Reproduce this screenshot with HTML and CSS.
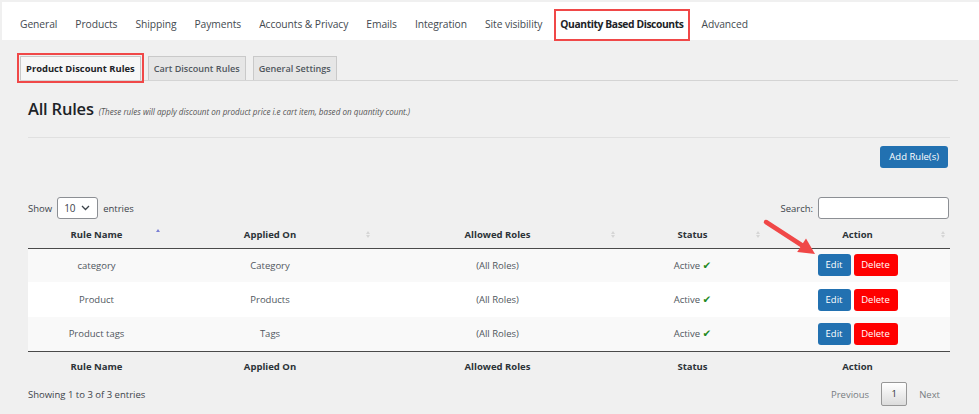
FILE: index.html
```html
<!DOCTYPE html>
<html lang="en">
<head>
<meta charset="utf-8">
<title>Quantity Based Discounts</title>
<link rel="stylesheet" href="styles.css">
</head>
<body>
<div class="frame">
  <nav class="topnav">
    <a href="#">General</a>
    <a href="#">Products</a>
    <a href="#">Shipping</a>
    <a href="#">Payments</a>
    <a href="#">Accounts &amp; Privacy</a>
    <a href="#">Emails</a>
    <a href="#">Integration</a>
    <a href="#">Site visibility</a>
    <a href="#" class="active">Quantity Based Discounts</a>
    <a href="#">Advanced</a>
  </nav>

  <div class="content">
    <div class="subtabs">
      <a href="#" class="tab active">Product Discount Rules</a>
      <a href="#" class="tab">Cart Discount Rules</a>
      <a href="#" class="tab">General Settings</a>
    </div>

    <div class="panel">
      <div class="heading">
        <h2>All Rules</h2>
        <span class="hint">(These rules will apply discount on product price i.e cart item, based on quantity count.)</span>
      </div>
      <hr class="rule">

      <div class="actions-row">
        <a href="#" class="btn btn-blue btn-add">Add Rule(s)</a>
      </div>

      <div class="controls">
        <div class="length">
          <span>Show</span>
          <span class="select"><span>10</span>
            <svg width="9" height="6" viewBox="0 0 9 6"><path d="M1 1 L4.5 4.5 L8 1" fill="none" stroke="#3c434a" stroke-width="1.3"/></svg>
          </span>
          <span>entries</span>
        </div>
        <div class="search">
          <span>Search:</span>
          <span class="input"></span>
        </div>
      </div>

      <table class="rules">
        <colgroup>
          <col class="c1"><col class="c2"><col class="c3"><col class="c4"><col class="c5">
        </colgroup>
        <thead>
          <tr>
            <th><div class="th"><span></span><span>Rule Name</span><span class="sort asc"><i class="up"></i><i class="down"></i></span></div></th>
            <th><div class="th"><span></span><span>Applied On</span><span class="sort"><i class="up"></i><i class="down"></i></span></div></th>
            <th><div class="th"><span></span><span>Allowed Roles</span><span class="sort"><i class="up"></i><i class="down"></i></span></div></th>
            <th><div class="th"><span></span><span>Status</span><span class="sort"><i class="up"></i><i class="down"></i></span></div></th>
            <th><div class="th"><span></span><span>Action</span><span class="sort"><i class="up"></i><i class="down"></i></span></div></th>
          </tr>
        </thead>
        <tbody>
          <tr>
            <td>category</td>
            <td>Category</td>
            <td>(All Roles)</td>
            <td>Active <span class="check">✔</span></td>
            <td><span class="btns"><a href="#" class="btn btn-blue">Edit</a><a href="#" class="btn btn-red">Delete</a></span></td>
          </tr>
          <tr>
            <td>Product</td>
            <td>Products</td>
            <td>(All Roles)</td>
            <td>Active <span class="check">✔</span></td>
            <td><span class="btns"><a href="#" class="btn btn-blue">Edit</a><a href="#" class="btn btn-red">Delete</a></span></td>
          </tr>
          <tr>
            <td>Product tags</td>
            <td>Tags</td>
            <td>(All Roles)</td>
            <td>Active <span class="check">✔</span></td>
            <td><span class="btns"><a href="#" class="btn btn-blue">Edit</a><a href="#" class="btn btn-red">Delete</a></span></td>
          </tr>
        </tbody>
        <tfoot>
          <tr>
            <th>Rule Name</th>
            <th>Applied On</th>
            <th>Allowed Roles</th>
            <th>Status</th>
            <th>Action</th>
          </tr>
        </tfoot>
      </table>

      <div class="table-footer">
        <span class="info">Showing 1 to 3 of 3 entries</span>
        <div class="paging">
          <a href="#" class="pg-link">Previous</a>
          <a href="#" class="pg-current">1</a>
          <a href="#" class="pg-link">Next</a>
        </div>
      </div>
    </div>
  </div>

  <svg class="arrow" width="60" height="45" viewBox="0 0 60 45">
    <line x1="6" y1="7" x2="43" y2="31" stroke="#f04747" stroke-width="4.5" stroke-linecap="round"/>
    <polygon points="55,39 37.2,36.9 46,23.5" fill="#f04747"/>
  </svg>
</div>
</body>
</html>
```

FILE: styles.css
```css
* { box-sizing: border-box; }

body {
  margin: 0;
  background: #f0f0f0;
  font-family: "Open Sans", "Noto Sans", sans-serif;
  color: #3c434a;
}

a { text-decoration: none; }

.frame {
  position: relative;
  width: 979px;
  height: 414px;
  overflow: hidden;
}

/* Top navigation */
.topnav {
  margin: 2px 0 0 2px;
  height: 38px;
  background: #fff;
  display: flex;
  gap: 6px;
  padding: 7px 0 0 12px;
}
.topnav a {
  display: block;
  height: 32px;
  padding: 6px 4px 0;
  border: 2px solid transparent;
  font-size: 10.3px;
  line-height: 14px;
  color: #444a50;
  white-space: nowrap;
  letter-spacing: -0.08px;
}
.topnav a.active {
  border-color: #f04848;
  color: #1d2327;
  font-weight: 700;
  letter-spacing: -0.4px;
}

/* Content */
.content {
  padding: 16px 21px 0 20px;
}

.subtabs {
  display: flex;
  gap: 7px;
  height: 25px;
  border-bottom: 1px solid #d4d4d4;
}
.tab {
  display: block;
  height: 24px;
  padding: 0 5px;
  border: 1px solid #c9c9c9;
  border-bottom: none;
  background: #e6e6e6;
  font-size: 9.1px;
  font-weight: 600;
  line-height: 23px;
  color: #50575e;
  white-space: nowrap;
}
.tab.active {
  background: #f7f7f7;
  color: #1d2327;
  font-size: 9.4px;
  font-weight: 700;
  outline: 2px solid #f04848;
  outline-offset: 1px;
}

.panel {
  padding: 0 8px;
}

.heading {
  margin-top: 18px;
  height: 20px;
  display: flex;
  align-items: baseline;
  gap: 5px;
}
.heading h2 {
  margin: 0;
  font-size: 16.5px;
  font-weight: 600;
  line-height: 20px;
  color: #1d2327;
  letter-spacing: -0.2px;
}
.hint {
  font-size: 8.1px;
  font-style: italic;
  color: #555;
}

.rule {
  border: 0;
  border-top: 1px solid #e0e0e0;
  margin: 18px 0 0;
  height: 0;
}

.actions-row {
  display: flex;
  justify-content: flex-end;
  margin-top: 8px;
  padding-right: 2px;
}

.btn {
  display: inline-block;
  height: 22px;
  line-height: 22px;
  padding: 0 8px;
  border-radius: 3px;
  font-size: 9.5px;
  color: #fff;
}
.btn-blue { background: #2271b1; }
.btn-red { background: #ff0000; }
.btn-add { padding: 0 9px; }

.controls {
  margin-top: 29px;
  height: 22px;
  display: flex;
  justify-content: space-between;
  align-items: center;
  font-size: 9.5px;
  color: #3c434a;
}
.length, .search {
  display: flex;
  align-items: center;
  gap: 5px;
}
.select {
  width: 41px;
  height: 22px;
  border: 1px solid #8c8f94;
  border-radius: 3px;
  background: #fff;
  display: flex;
  align-items: center;
  justify-content: space-between;
  padding: 0 7px 0 6px;
  font-size: 10px;
}
.search { padding-right: 1px; }
.input {
  display: block;
  width: 131px;
  height: 22px;
  border: 1px solid #8c8f94;
  border-radius: 3px;
  background: #fff;
}

/* Table */
.rules {
  margin-top: 3px;
  width: 922px;
  border-collapse: collapse;
  table-layout: fixed;
  font-size: 9.5px;
}
.c1 { width: 137px; }
.c2 { width: 210px; }
.c3 { width: 245px; }
.c4 { width: 145px; }
.c5 { width: 185px; }

.rules th {
  font-weight: 700;
  color: #2c3338;
  text-align: center;
  padding: 0;
}
.rules thead th {
  height: 26px;
  border-bottom: 1px solid #4a4a4a;
}
.th {
  display: grid;
  grid-template-columns: 1fr auto 1fr;
  align-items: center;
}
.sort {
  justify-self: end;
  margin-right: 5px;
  display: flex;
  flex-direction: column;
  gap: 1px;
}
.sort i {
  display: block;
  width: 0;
  height: 0;
  border-left: 2.5px solid transparent;
  border-right: 2.5px solid transparent;
}
.sort .up { border-bottom: 3.5px solid #d6d6d6; }
.sort .down { border-top: 3.5px solid #d6d6d6; }
.sort.asc { transform: translateY(-2px); }
.sort.asc .up { border-bottom-color: #7a7fd4; }
.sort.asc .down { border-top-color: transparent; }

.rules td {
  height: 34.4px;
  text-align: center;
  color: #50575e;
  padding: 0 10px;
}
.rules tbody tr:nth-child(odd) { background: #f9f9f9; }
.rules tbody tr:nth-child(even) { background: #fff; }

.rules tfoot th {
  height: 31px;
  border-top: 1px solid #4a4a4a;
}

.check {
  font-family: "DejaVu Sans", sans-serif;
  font-size: 10.5px;
  color: #1e8a1e;
}

.btns {
  display: inline-flex;
  gap: 3px;
  vertical-align: middle;
}
.btns .btn-blue { width: 33px; padding: 0; text-align: center; }
.btns .btn-red { width: 44px; padding: 0; text-align: center; }

.table-footer {
  height: 24px;
  display: flex;
  justify-content: space-between;
  align-items: center;
  font-size: 9.5px;
  color: #3c434a;
}
.paging {
  display: flex;
  align-items: center;
  gap: 12px;
  padding-right: 10px;
}
.pg-link { color: #787c82; }
.pg-current {
  display: block;
  width: 26px;
  height: 24px;
  line-height: 22px;
  text-align: center;
  border: 1px solid #979797;
  border-radius: 2px;
  background: linear-gradient(#ffffff, #dcdcdc);
  color: #333;
}

.arrow {
  position: absolute;
  left: 760px;
  top: 215px;
}
```
